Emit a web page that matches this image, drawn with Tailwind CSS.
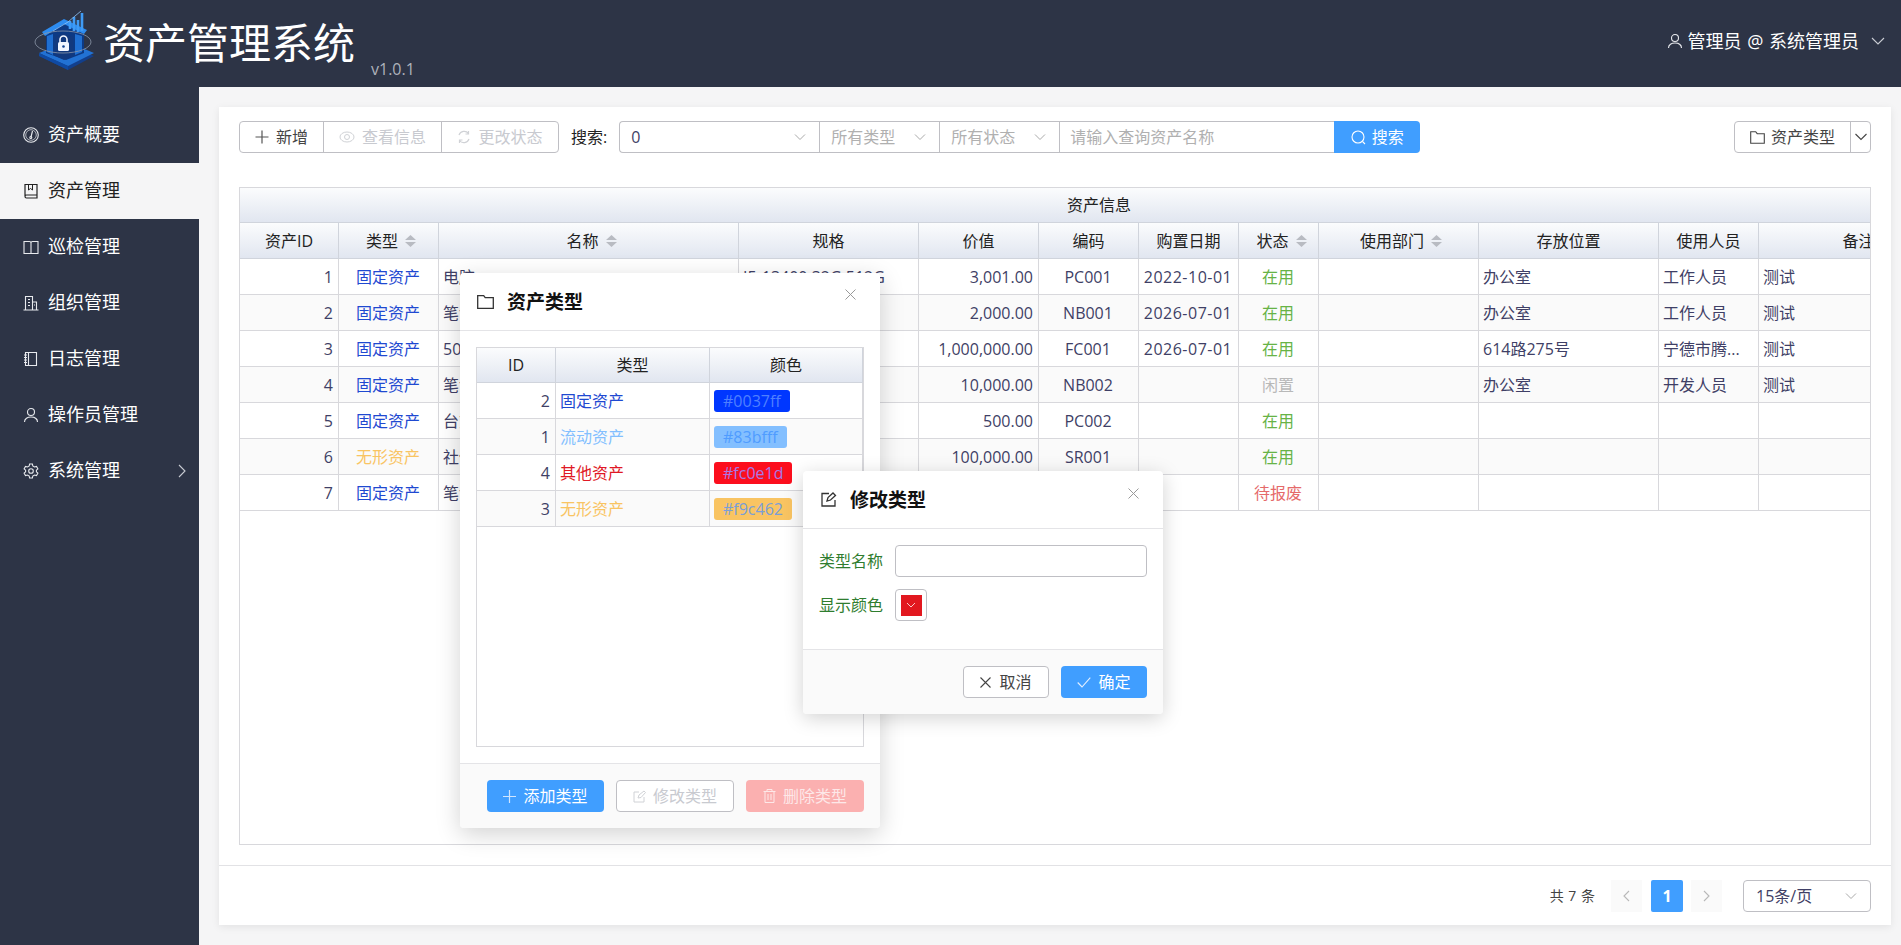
<!DOCTYPE html>
<html lang="en">
<head>
    <meta charset="UTF-8">
    <title>资产管理系统</title>
    <script src="https://cdn.jsdelivr.net/npm/@tailwindcss/browser@4"></script>
</head>
<body class="relative w-[1901px] h-[945px] overflow-hidden flex flex-col bg-[#f5f5f6] text-[16px] text-[#3f3f66] font-['Open_Sans','Noto_Sans_CJK_SC',sans-serif]">

    <!-- Top bar -->
    <header class="h-[87px] shrink-0 bg-[#2d3446] flex items-start text-white">
        <svg class="ml-[20px] shrink-0" width="83" height="80" viewBox="0 0 83 80" fill="none">
            <polygon points="19,56 48,45 74,56 48,70" fill="#123f8c"/>
            <polygon points="19,53 48,42 74,53 48,66" fill="#2272d4"/>
            <polygon points="19,53 48,66 48,70 19,56" fill="#0f4aa3"/>
            <polygon points="26,31 44,21 64,31 64,53 46,60 26,53" fill="#0d3a84"/>
            <polygon points="22,32 44,19 67,30 64,34 44,24 25,36" fill="#2d8cf0"/>
            <polygon points="27,36 33,34 33,55 27,52" fill="#1f6fd2"/>
            <polygon points="55,34 62,36 62,52 55,55" fill="#1f6fd2"/>
            <polygon points="35,37 44,33 53,37 53,56 44,60 35,56" fill="#12397e"/>
            <rect x="38" y="42" width="11" height="9" rx="1.500" fill="#f2f6ff"/>
            <path d="M40 42v-2.500a3.500 3.500 0 0 1 7 0V42" stroke="#f2f6ff" stroke-width="1.600"/>
            <circle cx="43.500" cy="46.500" r="1.300" fill="#10418f"/>
            <path d="M50 29V21M54 31V17M58 32V20M62 31V13" stroke="#3f9bf5" stroke-width="2.600"/>
            <path d="M33 31L48 22L55 16L61 11" stroke="#8fc4f7" stroke-width="0.800"/>
            <ellipse cx="43" cy="42" rx="28" ry="11" stroke="#8c97a8" stroke-width="0.800"/>
        </svg>
        <h1 class="text-[42px] leading-[85px] font-normal whitespace-nowrap">资产管理系统</h1>
        <span class="ml-[16px] mt-[58px] text-[16px] leading-[22px] text-[#aeb2bb]">v1.0.1</span>
        <div class="ml-auto mr-[16px] h-[82px] flex items-center text-[18px]">
            <svg class="mr-[5px]" width="16" height="16" viewBox="0 0 16 16" fill="none" stroke="#e8eaee" stroke-width="1.100"><circle cx="8" cy="5" r="3.500"/><path d="M1.500 15c0-3.500 3-5 6.500-5s6.500 1.500 6.500 5"/></svg>
            <span class="whitespace-nowrap [word-spacing:1px]">管理员 @ 系统管理员</span>
            <svg class="ml-[12px]" width="14" height="14" viewBox="0 0 14 14" fill="none" stroke="#c9ccd3" stroke-width="1.100"><path d="M1 4l6 6 6-6"/></svg>
        </div>
    </header>

    <div class="flex-1 flex min-h-0">
        <!-- Side menu -->
        <aside class="w-[199px] shrink-0 bg-[#2d3446] pt-[20px] text-[18px] text-white">
            <div class="h-[56px] flex items-center pl-[23px] gap-[9px]">
                <svg width="16" height="16" viewBox="0 0 16 16" fill="none" stroke="#e8eaee" stroke-width="1.100"><circle cx="8" cy="8" r="7.300"/><circle cx="8" cy="8" r="5.300" stroke-width="0.700"/><path d="M9.500 4L8 10"/><circle cx="7.800" cy="10.500" r="1"/></svg>
                <span class="pb-[2px]">资产概要</span>
            </div>
            <div class="h-[56px] flex items-center pl-[23px] gap-[9px] bg-[#f5f5f6] text-[#222]">
                <svg width="16" height="16" viewBox="0 0 16 16" fill="none" stroke="#222" stroke-width="1.200"><path d="M2 13V1.500h12V15H3.500A1.500 1.500 0 0 1 2 13.500a1.500 1.500 0 0 1 1.500-1.500H14"/><path d="M5.500 1.500V7l2-1.500L9.500 7V1.500" stroke-width="1"/></svg>
                <span class="pb-[2px]">资产管理</span>
            </div>
            <div class="h-[56px] flex items-center pl-[23px] gap-[9px]">
                <svg width="16" height="16" viewBox="0 0 16 16" fill="none" stroke="#e8eaee" stroke-width="1.100"><path d="M1 2.500h5.500A1.500 1.500 0 0 1 8 4v10.500H1zM15 2.500H9.500A1.500 1.500 0 0 0 8 4v10.500h7z"/></svg>
                <span class="pb-[2px]">巡检管理</span>
            </div>
            <div class="h-[56px] flex items-center pl-[23px] gap-[9px]">
                <svg width="16" height="16" viewBox="0 0 16 16" fill="none" stroke="#e8eaee" stroke-width="1.100"><path d="M2.500 15V1.500h7V15M9.500 7h4V15M0.500 15h15M5 4.500h2M5 7.500h2M5 10.500h2M11 10h1"/></svg>
                <span class="pb-[2px]">组织管理</span>
            </div>
            <div class="h-[56px] flex items-center pl-[23px] gap-[9px]">
                <svg width="16" height="16" viewBox="0 0 16 16" fill="none" stroke="#e8eaee" stroke-width="1.100"><path d="M2.500 1.500h11v13h-11zM5.500 1.500v13M1 4h3M1 6.500h3M1 9h3M1 11.500h3"/></svg>
                <span class="pb-[2px]">日志管理</span>
            </div>
            <div class="h-[56px] flex items-center pl-[23px] gap-[9px]">
                <svg width="16" height="16" viewBox="0 0 16 16" fill="none" stroke="#e8eaee" stroke-width="1.100"><circle cx="8" cy="5" r="3.500"/><path d="M1.500 15c0-3.500 3-5 6.500-5s6.500 1.500 6.500 5"/></svg>
                <span class="pb-[2px]">操作员管理</span>
            </div>
            <div class="h-[56px] flex items-center pl-[23px] gap-[9px]">
                <svg width="16" height="16" viewBox="0 0 16 16" fill="none" stroke="#e8eaee" stroke-width="1.100"><path d="M6.600 1h2.800l.4 2 1.700 1 2-.6 1.400 2.400-1.500 1.400v1.600l1.500 1.400-1.400 2.400-2-.6-1.700 1-.4 2H6.600l-.4-2-1.700-1-2 .6L1.100 10.200l1.500-1.400V7.200L1.100 5.800l1.400-2.400 2 .6 1.700-1z"/><circle cx="8" cy="8" r="2.300"/></svg>
                <span class="pb-[2px]">系统管理</span>
                <svg class="ml-auto mr-[13px]" width="8" height="14" viewBox="0 0 8 14" fill="none" stroke="#c9ccd3" stroke-width="1.100"><path d="M1 1l6 6-6 6"/></svg>
            </div>
        </aside>

        <!-- Content -->
        <main class="flex-1 min-w-0 pt-[20px] pb-[20px] pl-[20px] pr-[10px] flex">
            <section class="flex-1 min-w-0 bg-white shadow-[0_2px_8px_rgba(0,0,0,0.08)] flex flex-col">
                <div class="h-[80px] shrink-0 pt-[14px] px-[20px] flex items-start">
                    <div class="h-[32px] flex border border-[#bfbfc4] rounded-[4px] divide-x divide-[#bfbfc4]">
                        <div class="w-[84px] flex items-center justify-center gap-[7px] text-[#444]">
                            <svg width="14" height="14" viewBox="0 0 14 14" stroke="#555" stroke-width="1.200"><path d="M7 0.500v13M0.500 7h13"/></svg>新增
                        </div>
                        <div class="w-[118px] flex items-center justify-center gap-[7px] text-[#c8cad0]">
                            <svg width="16" height="12" viewBox="0 0 16 12" fill="none" stroke="#d0d2d6" stroke-width="1"><ellipse cx="8" cy="6" rx="7" ry="5"/><circle cx="8" cy="6" r="2.500"/></svg>查看信息
                        </div>
                        <div class="w-[116px] flex items-center justify-center gap-[7px] text-[#c8cad0]">
                            <svg width="14" height="14" viewBox="0 0 14 14" fill="none" stroke="#d0d2d6" stroke-width="1.200"><path d="M2 5a5.500 5.500 0 0 1 9.500-1.500M12 9a5.500 5.500 0 0 1-9.500 1.500M11.500 1v3h-3M2.500 13v-3h3"/></svg>更改状态
                        </div>
                    </div>
                    <span class="ml-[12px] leading-[32px] text-[#222] whitespace-nowrap">搜索:</span>
                    <div class="ml-[12px] h-[32px] flex border border-[#bfbfc4] border-r-0 rounded-l-[4px] divide-x divide-[#bfbfc4]">
                        <div class="w-[200px] flex items-center justify-between pl-[11px] pr-[13px]">0
                            <svg width="12" height="12" viewBox="0 0 12 12" fill="none" stroke="#aaa" stroke-width="1"><path d="M1 3.500l5 5 5-5"/></svg>
                        </div>
                        <div class="w-[120px] flex items-center justify-between pl-[11px] pr-[13px] text-[#b0b0b0]">所有类型
                            <svg width="12" height="12" viewBox="0 0 12 12" fill="none" stroke="#aaa" stroke-width="1"><path d="M1 3.500l5 5 5-5"/></svg>
                        </div>
                        <div class="w-[120px] flex items-center justify-between pl-[11px] pr-[13px] text-[#b0b0b0]">所有状态
                            <svg width="12" height="12" viewBox="0 0 12 12" fill="none" stroke="#aaa" stroke-width="1"><path d="M1 3.500l5 5 5-5"/></svg>
                        </div>
                        <input class="w-[274px] px-[10px] outline-none placeholder:text-[#b0b0b0]" placeholder="请输入查询资产名称">
                    </div>
                    <div class="w-[86px] h-[32px] bg-[#409eff] text-white rounded-r-[4px] flex items-center justify-center gap-[6px]">
                        <svg width="15" height="15" viewBox="0 0 15 15" fill="none" stroke="#fff" stroke-width="1.100"><circle cx="7" cy="7" r="6"/><path d="M11.500 11.500l2.500 2.500"/></svg>搜索
                    </div>
                    <div class="ml-auto h-[32px] flex border border-[#bfbfc4] rounded-[4px] divide-x divide-[#bfbfc4] text-[#444]">
                        <div class="w-[116px] flex items-center justify-center gap-[6px]">
                            <svg width="15" height="13" viewBox="0 0 15 13" fill="none" stroke="#444" stroke-width="1.100"><path d="M0.700 12.300V0.700h5l1.500 2h7.100v9.600z"/></svg>资产类型
                        </div>
                        <div class="w-[19px] flex items-center justify-center">
                            <svg width="12" height="12" viewBox="0 0 12 12" fill="none" stroke="#444" stroke-width="1.100"><path d="M0.500 3l5.500 5.500L11.500 3"/></svg>
                        </div>
                    </div>
                </div>

                <!-- Asset table -->
                <div class="mx-[20px] flex-1 min-h-0 border border-[#d8d8dc] overflow-hidden">
                    <table class="w-[1719px] table-fixed border-separate border-spacing-0 [&_td]:h-[36px] [&_td]:pl-[4px] [&_td]:pr-[5px] [&_td]:border-r [&_td]:border-b [&_td]:border-[#d8d8dc] [&_td]:whitespace-nowrap [&_td]:overflow-hidden [&_th]:font-normal [&_th]:text-[#222] [&_th]:border-r [&_th]:border-b [&_th]:border-[#d0d4dc] [&_th]:bg-linear-to-b [&_th]:from-[#fbfcfd] [&_th]:to-[#e1e6f0]">
                        <colgroup>
                            <col class="w-[99px]"><col class="w-[100px]"><col class="w-[300px]"><col class="w-[180px]"><col class="w-[120px]"><col class="w-[100px]"><col class="w-[100px]"><col class="w-[80px]"><col class="w-[160px]"><col class="w-[180px]"><col class="w-[100px]"><col class="w-[200px]">
                        </colgroup>
                        <thead>
                            <tr><th colspan="12" class="h-[35px]">资产信息</th></tr>
                            <tr class="[&_th]:h-[36px]">
                                <th>资产ID</th>
                                <th><span class="ml-[5px] inline-flex items-center gap-[7px]">类型
                                    <svg width="11" height="12" viewBox="0 0 11 12" fill="#b8bbc2"><path d="M5.500 0L11 5H0zM5.500 12L0 7h11z"/></svg></span></th>
                                <th><span class="ml-[6px] inline-flex items-center gap-[7px]">名称
                                    <svg width="11" height="12" viewBox="0 0 11 12" fill="#b8bbc2"><path d="M5.500 0L11 5H0zM5.500 12L0 7h11z"/></svg></span></th>
                                <th>规格</th>
                                <th>价值</th>
                                <th>编码</th>
                                <th>购置日期</th>
                                <th><span class="ml-[6px] inline-flex items-center gap-[7px]">状态
                                    <svg width="11" height="12" viewBox="0 0 11 12" fill="#b8bbc2"><path d="M5.500 0L11 5H0zM5.500 12L0 7h11z"/></svg></span></th>
                                <th><span class="ml-[5px] inline-flex items-center gap-[7px]">使用部门
                                    <svg width="11" height="12" viewBox="0 0 11 12" fill="#b8bbc2"><path d="M5.500 0L11 5H0zM5.500 12L0 7h11z"/></svg></span></th>
                                <th>存放位置</th>
                                <th>使用人员</th>
                                <th>备注</th>
                            </tr>
                        </thead>
                        <tbody>
                            <tr>
                                <td class="text-right">1</td><td class="text-center text-[#1f49d1]">固定资产</td><td>电脑</td><td>I5-13400 32G 512G</td><td class="text-right">3,001.00</td><td class="text-center">PC001</td><td class="text-center tracking-[0.5px]">2022-10-01</td><td class="text-center text-[#67b346]">在用</td><td></td><td>办公室</td><td>工作人员</td><td>测试</td>
                            </tr>
                            <tr class="bg-[#fafafa]">
                                <td class="text-right">2</td><td class="text-center text-[#1f49d1]">固定资产</td><td>笔记本电脑</td><td></td><td class="text-right">2,000.00</td><td class="text-center">NB001</td><td class="text-center tracking-[0.5px]">2026-07-01</td><td class="text-center text-[#67b346]">在用</td><td></td><td>办公室</td><td>工作人员</td><td>测试</td>
                            </tr>
                            <tr>
                                <td class="text-right">3</td><td class="text-center text-[#1f49d1]">固定资产</td><td>50</td><td></td><td class="text-right">1,000,000.00</td><td class="text-center">FC001</td><td class="text-center tracking-[0.5px]">2026-07-01</td><td class="text-center text-[#67b346]">在用</td><td></td><td>614路275号</td><td>宁德市腾...</td><td>测试</td>
                            </tr>
                            <tr class="bg-[#fafafa]">
                                <td class="text-right">4</td><td class="text-center text-[#1f49d1]">固定资产</td><td>笔记本电脑</td><td></td><td class="text-right">10,000.00</td><td class="text-center">NB002</td><td></td><td class="text-center text-[#b8b8b8]">闲置</td><td></td><td>办公室</td><td>开发人员</td><td>测试</td>
                            </tr>
                            <tr>
                                <td class="text-right">5</td><td class="text-center text-[#1f49d1]">固定资产</td><td>台式电脑</td><td></td><td class="text-right">500.00</td><td class="text-center">PC002</td><td></td><td class="text-center text-[#67b346]">在用</td><td></td><td></td><td></td><td></td>
                            </tr>
                            <tr class="bg-[#fafafa]">
                                <td class="text-right">6</td><td class="text-center text-[#f9c462]">无形资产</td><td>社保系统</td><td></td><td class="text-right">100,000.00</td><td class="text-center">SR001</td><td></td><td class="text-center text-[#67b346]">在用</td><td></td><td></td><td></td><td></td>
                            </tr>
                            <tr>
                                <td class="text-right">7</td><td class="text-center text-[#1f49d1]">固定资产</td><td>笔记本电脑</td><td></td><td></td><td></td><td></td><td class="text-center text-[#e56a6a]">待报废</td><td></td><td></td><td></td><td></td>
                            </tr>
                        </tbody>
                    </table>
                </div>

                <!-- Pagination -->
                <div class="mt-[20px] h-[60px] shrink-0 border-t border-[#e2e2e5] pt-[14px] px-[20px] flex items-start justify-end text-[14px] text-[#444]">
                    <span class="leading-[32px] mr-[16px] [word-spacing:1px]">共 7 条</span>
                    <div class="w-[31px] h-[32px] bg-[#fafafa] flex items-center justify-center">
                        <svg width="7" height="12" viewBox="0 0 7 12" fill="none" stroke="#b8b8b8" stroke-width="1.100"><path d="M6 1L1 6l5 5"/></svg>
                    </div>
                    <div class="ml-[9px] w-[32px] h-[32px] bg-[#409eff] rounded-[2px] text-[16px] text-white font-bold flex items-center justify-center">1</div>
                    <div class="ml-[8px] w-[31px] h-[32px] bg-[#fafafa] flex items-center justify-center">
                        <svg width="7" height="12" viewBox="0 0 7 12" fill="none" stroke="#b8b8b8" stroke-width="1.100"><path d="M1 1l5 5-5 5"/></svg>
                    </div>
                    <div class="ml-[21px] w-[128px] h-[32px] border border-[#bfbfc4] rounded-[4px] flex items-center justify-between pl-[12px] pr-[13px] text-[16px] text-[#3f3f66]">15条/页
                        <svg width="12" height="12" viewBox="0 0 12 12" fill="none" stroke="#aaa" stroke-width="1"><path d="M1 3.500l5 5 5-5"/></svg>
                    </div>
                </div>
            </section>
        </main>
    </div>

    <!-- Asset type dialog -->
    <div class="absolute left-[460px] top-[273px] w-[420px] h-[555px] bg-white rounded-[4px] shadow-[0_6px_24px_rgba(0,0,0,0.18)] flex flex-col">
        <div class="h-[58px] shrink-0 border-b border-[#e4e4e7] pl-[17px] flex items-center gap-[13px] relative">
            <svg width="17" height="14" viewBox="0 0 17 14" fill="none" stroke="#333" stroke-width="1.300"><path d="M0.700 13.300V0.700h6l1.500 2h8.100v10.600z"/></svg>
            <span class="text-[19px] font-bold text-[#111] leading-[28px]">资产类型</span>
            <svg class="absolute left-[385px] top-[16px]" width="11" height="11" viewBox="0 0 11 11" stroke="#999" stroke-width="1"><path d="M0.500 0.500l10 10M10.500 0.500l-10 10"/></svg>
        </div>
        <div class="flex-1 min-h-0 px-[16px] pt-[16px] pb-[16px]">
            <div class="h-full border border-[#d8d8dc] overflow-hidden">
                <table class="w-full table-fixed border-separate border-spacing-0 [&_td]:h-[36px] [&_td]:pl-[4px] [&_td]:pr-[5px] [&_td]:border-r [&_td]:border-b [&_td]:border-[#d8d8dc] [&_th]:h-[35px] [&_th]:font-normal [&_th]:text-[#222] [&_th]:border-r [&_th]:border-b [&_th]:border-[#d0d4dc] [&_th]:bg-linear-to-b [&_th]:from-[#fbfcfd] [&_th]:to-[#e1e6f0]">
                    <colgroup><col class="w-[79px]"><col class="w-[154px]"><col></colgroup>
                    <thead><tr><th>ID</th><th>类型</th><th class="border-r-0">颜色</th></tr></thead>
                    <tbody>
                        <tr><td class="text-right">2</td><td class="text-[#1f49d1]">固定资产</td><td><span class="inline-block h-[22px] leading-[22px] px-[9px] rounded-[3px] bg-[#0037ff] text-[#4f80ff]">#0037ff</span></td></tr>
                        <tr class="bg-[#fafafa]"><td class="text-right">1</td><td class="text-[#83bfff]">流动资产</td><td><span class="inline-block h-[22px] leading-[22px] px-[9px] rounded-[3px] bg-[#83bfff] text-[#4f9cff]">#83bfff</span></td></tr>
                        <tr><td class="text-right">4</td><td class="text-[#e01825]">其他资产</td><td><span class="inline-block h-[22px] leading-[22px] px-[9px] rounded-[3px] bg-[#fc0e1d] text-[#a878e6]">#fc0e1d</span></td></tr>
                        <tr class="bg-[#fafafa]"><td class="text-right">3</td><td class="text-[#f9c462]">无形资产</td><td><span class="inline-block h-[22px] leading-[22px] px-[9px] rounded-[3px] bg-[#f9c462] text-[#7a9ed8]">#f9c462</span></td></tr>
                    </tbody>
                </table>
            </div>
        </div>
        <div class="h-[65px] shrink-0 border-t border-[#e4e4e7] bg-[#fafafa] rounded-b-[4px] pt-[16px] pr-[16px] flex items-start justify-end gap-[12px]">
            <div class="w-[117px] h-[32px] rounded-[4px] bg-[#409eff] text-white flex items-center justify-center gap-[7px]">
                <svg width="13" height="13" viewBox="0 0 13 13" stroke="#cfe5ff" stroke-width="1.200"><path d="M6.500 0v13M0 6.500h13"/></svg>添加类型
            </div>
            <div class="w-[118px] h-[32px] rounded-[4px] bg-white border border-[#bfbfc4] text-[#c8cad0] flex items-center justify-center gap-[7px]">
                <svg width="13" height="13" viewBox="0 0 13 13" fill="none" stroke="#d0d2d6" stroke-width="1"><path d="M11 7v5H1V2h5M5 8l1-3 5-4 1.500 1.500-4.500 5z"/></svg>修改类型
            </div>
            <div class="w-[118px] h-[32px] rounded-[4px] bg-[#fbb0b0] text-[#fde8e8] flex items-center justify-center gap-[7px]">
                <svg width="13" height="14" viewBox="0 0 13 14" fill="none" stroke="#fde8e8" stroke-width="1"><path d="M0.500 2.500h12M4 2.500V0.500h5v2M2 2.500V13.500h9V2.500M5 5v6M8 5v6"/></svg>删除类型
            </div>
        </div>
    </div>

    <!-- Edit type dialog -->
    <div class="absolute left-[803px] top-[471px] w-[360px] h-[243px] bg-white rounded-[4px] shadow-[0_4px_20px_rgba(0,0,0,0.18)] flex flex-col">
        <div class="h-[58px] shrink-0 border-b border-[#e4e4e7] pl-[18px] flex items-center gap-[13px] relative">
            <svg width="16" height="15" viewBox="0 0 16 15" fill="none" stroke="#333" stroke-width="1.300"><path d="M14 8v6H1V1.500h7M6 9l1-3.500 5-4.500 2.500 2.500L9.500 8z"/></svg>
            <span class="text-[19px] font-bold text-[#111] leading-[28px]">修改类型</span>
            <svg class="absolute left-[325px] top-[17px]" width="11" height="11" viewBox="0 0 11 11" stroke="#999" stroke-width="1"><path d="M0.500 0.500l10 10M10.500 0.500l-10 10"/></svg>
        </div>
        <div class="flex-1 min-h-0 pt-[16px] pl-[16px] pr-[16px] text-[#2f7d2f]">
            <div class="h-[32px] flex items-center gap-[12px]">
                <span class="whitespace-nowrap">类型名称</span>
                <input class="flex-1 min-w-0 h-[32px] border border-[#bfbfc4] rounded-[4px] outline-none">
            </div>
            <div class="mt-[12px] h-[32px] flex items-center gap-[12px]">
                <span class="whitespace-nowrap">显示颜色</span>
                <div class="w-[32px] h-[32px] border border-[#bfbfc4] rounded-[4px] flex items-center justify-center">
                    <div class="w-[21px] h-[21px] bg-[#e2181f] flex items-center justify-center">
                        <svg width="10" height="10" viewBox="0 0 10 10" fill="none" stroke="#f6c8c8" stroke-width="1"><path d="M1 3l4 4 4-4"/></svg>
                    </div>
                </div>
            </div>
        </div>
        <div class="h-[65px] shrink-0 border-t border-[#e4e4e7] bg-[#fafafa] rounded-b-[4px] pt-[16px] pr-[16px] flex items-start justify-end gap-[12px]">
            <div class="w-[86px] h-[32px] rounded-[4px] bg-white border border-[#bfbfc4] text-[#444] flex items-center justify-center gap-[8px]">
                <svg width="11" height="11" viewBox="0 0 11 11" stroke="#444" stroke-width="1.100"><path d="M0.500 0.500l10 10M10.500 0.500l-10 10"/></svg>取消
            </div>
            <div class="w-[86px] h-[32px] rounded-[4px] bg-[#409eff] text-white flex items-center justify-center gap-[7px]">
                <svg width="14" height="11" viewBox="0 0 14 11" fill="none" stroke="#e4f0ff" stroke-width="1.100"><path d="M0.700 5.500l4.300 4.500L13.300 0.700"/></svg>确定
            </div>
        </div>
    </div>
</body>
</html>
